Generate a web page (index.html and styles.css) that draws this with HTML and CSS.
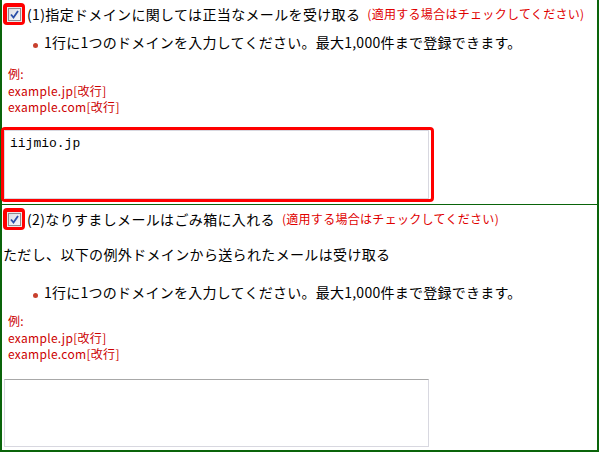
FILE: index.html
```html
<!DOCTYPE html>
<html lang="ja">
<head>
    <meta charset="UTF-8">
    <title>迷惑メールフィルター設定</title>
    <link rel="stylesheet" href="styles.css">
</head>
<body>
    <div class="panel">
        <div class="section first">
            <div class="head">
                <span class="mark"><span class="cb"><svg width="11" height="11" viewBox="0 0 11 11"><polyline points="2,5.5 4.5,8.5 9,2" fill="none" stroke="#2a4fa8" stroke-width="1.8"/></svg></span></span>
                <span class="title">(1)指定ドメインに関しては正当なメールを受け取る</span>
                <span class="note">(適用する場合はチェックしてください)</span>
            </div>
            <ul class="rules">
                <li>1行に1つのドメインを入力してください。最大1,000件まで登録できます。</li>
            </ul>
            <div class="examples">
                <div class="ex-label">例:</div>
                <div>example.jp[改行]</div>
                <div>example.com[改行]</div>
            </div>
            <div class="hl">
                <textarea class="domains">iijmio.jp</textarea>
            </div>
        </div>
        <div class="section second">
            <div class="head">
                <span class="mark"><span class="cb"><svg width="11" height="11" viewBox="0 0 11 11"><polyline points="2,5.5 4.5,8.5 9,2" fill="none" stroke="#2a4fa8" stroke-width="1.8"/></svg></span></span>
                <span class="title">(2)なりすましメールはごみ箱に入れる</span>
                <span class="note">(適用する場合はチェックしてください)</span>
            </div>
            <p class="desc">ただし、以下の例外ドメインから送られたメールは受け取る</p>
            <ul class="rules">
                <li>1行に1つのドメインを入力してください。最大1,000件まで登録できます。</li>
            </ul>
            <div class="examples">
                <div class="ex-label">例:</div>
                <div>example.jp[改行]</div>
                <div>example.com[改行]</div>
            </div>
            <textarea class="domains plain"></textarea>
        </div>
    </div>
</body>
</html>
```

FILE: styles.css
```css
body {
    margin: 0;
    font-family: "Noto Sans CJK JP", sans-serif;
    color: #000;
    background-color: #fff;
}
.panel {
    width: 599px;
    box-sizing: border-box;
    border: 2px solid #0a640a;
    border-top: none;
}
.section {
    padding: 2px 0 2px 0;
}
.section.first {
    padding-top: 3px;
    border-bottom: 1px solid #0a640a;
}
.section.second {
    padding-top: 3px;
    padding-bottom: 3px;
}
.head {
    display: flex;
    align-items: center;
    height: 22px;
    padding-left: 1px;
}
.mark {
    width: 22px;
    height: 22px;
    background-color: #ff0000;
    border-radius: 4px;
    display: flex;
    align-items: center;
    justify-content: center;
}
.cb {
    width: 11px;
    height: 11px;
    border: 1px solid #8a8c90;
    background: linear-gradient(135deg, #dcdfe4, #f6f7f9);
    box-shadow: 0 0 0 1px #e8e8e8;
    display: flex;
    align-items: center;
    justify-content: center;
}
.title {
    margin-left: 2px;
    font-size: 14px;
    line-height: 18px;
    letter-spacing: 0.35px;
}
.note {
    margin-left: 7px;
    font-size: 12px;
    line-height: 16px;
    letter-spacing: 0.3px;
    color: #e00000;
}
.rules {
    list-style: none;
    margin: 8px 0 0 0;
    padding: 0 0 0 42px;
}
.rules li {
    position: relative;
    font-size: 14px;
    line-height: 18px;
    letter-spacing: 0.25px;
}
.rules li::before {
    content: "";
    position: absolute;
    left: -11px;
    top: 10px;
    width: 5px;
    height: 5px;
    border-radius: 50%;
    background-color: #c8402e;
}
.second .rules {
    margin-top: 20px;
}
.desc {
    margin: 15px 0 0 1px;
    font-size: 14px;
    line-height: 18px;
    letter-spacing: 0.35px;
}
.examples {
    margin: 15px 0 0 6px;
    font-size: 12px;
    line-height: 16px;
    letter-spacing: 0.3px;
    color: #cc0000;
}
.second .examples {
    margin-top: 12px;
}
.ex-label {
    margin-bottom: 1px;
}
.hl {
    width: 427px;
    margin: 12px 0 0 -1px;
    border: 3px solid #ff0000;
    border-radius: 4px;
}
.domains {
    display: block;
    width: 425px;
    height: 69px;
    box-sizing: border-box;
    margin: 0;
    padding: 5px 5px;
    border: 1px solid #d8d8e0;
    font-family: "Liberation Mono", monospace;
    font-size: 13px;
    line-height: 16px;
    color: #000;
    resize: none;
}
.domains.plain {
    margin: 17px 0 0 2px;
    height: 68px;
    border-top-color: #a8a8a8;
}
```
